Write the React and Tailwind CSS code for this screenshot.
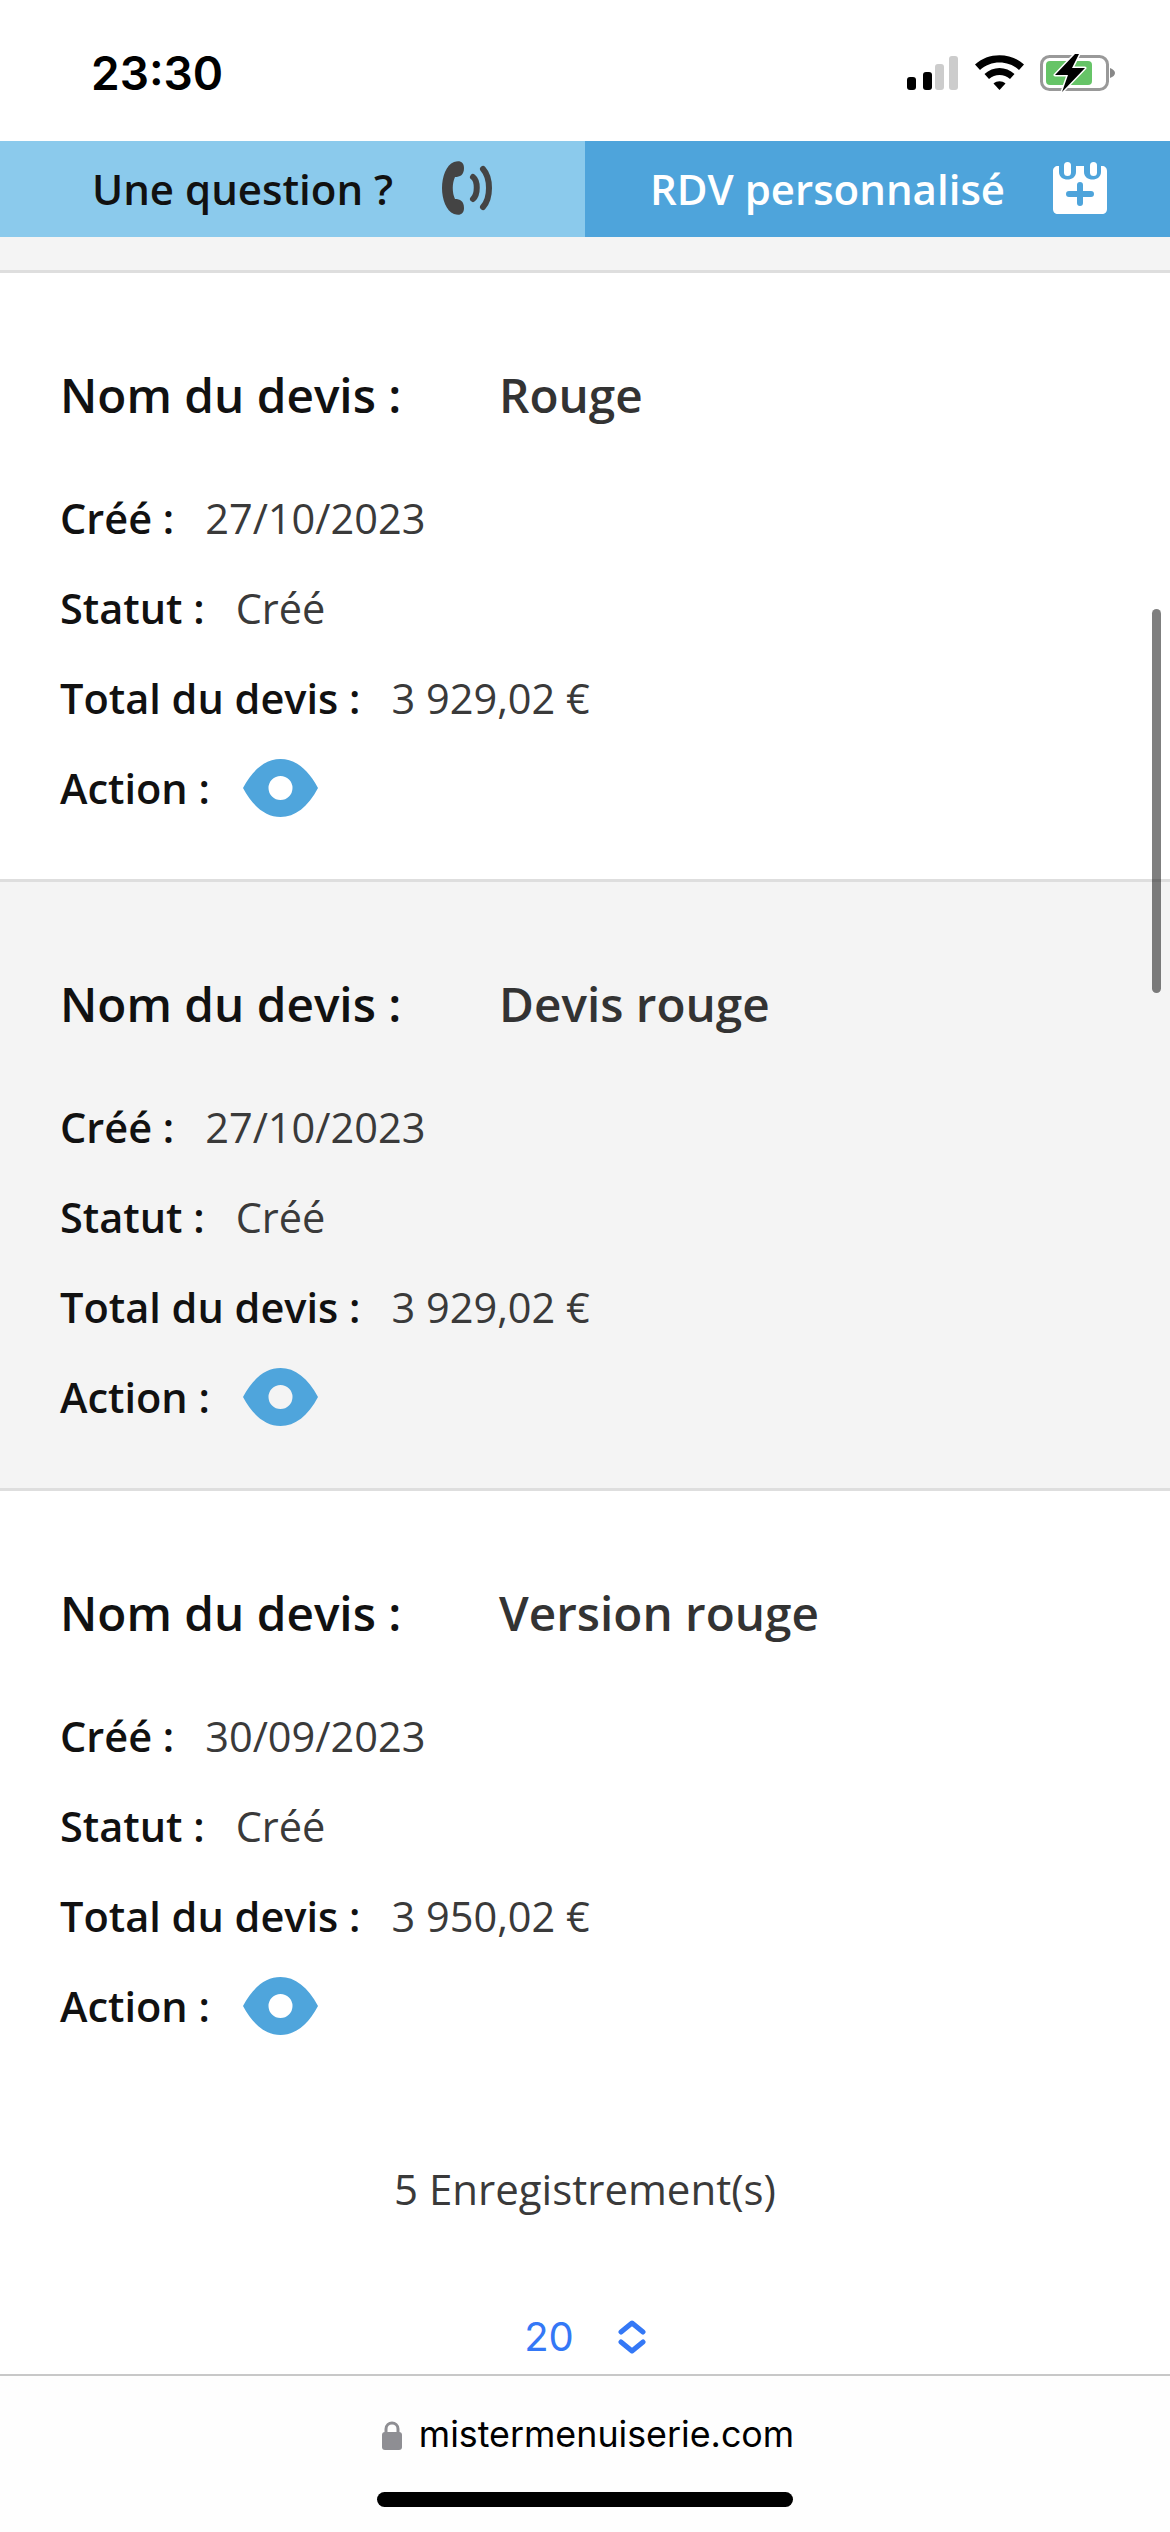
const devis = [
  { nom: 'Rouge', cree: '27/10/2023', total: '3 929,02 €', bg: 'bg-white border-[#dedede]' },
  { nom: 'Devis rouge', cree: '27/10/2023', total: '3 929,02 €', bg: 'bg-[#f4f4f4] border-[#dedede]' },
  { nom: 'Version rouge', cree: '30/09/2023', total: '3 950,02 €', bg: 'bg-white border-transparent' },
];

function StatusIcons() {
  return (
    <svg width="210" height="40" viewBox="0 0 210 40" className="block">
      <rect x="2" y="23" width="9" height="13" rx="3" fill="#000" />
      <rect x="18" y="18" width="9" height="18" rx="3" fill="#000" />
      <rect x="30" y="10" width="9" height="26" rx="3" fill="#ccc" />
      <rect x="44" y="2" width="9" height="34" rx="3" fill="#ccc" />
      <path d="M70 10.5C83 -2 106 -2 119 10.5L114 16C103.500 6 85.500 6 75 16Z" fill="#000" />
      <path d="M79.500 20C88 12 101 12 109.500 20L105 25C99 19.500 90 19.500 84 25Z" fill="#000" />
      <path d="M88.500 29.500C92 26.500 97 26.500 100.500 29.500L94.500 36Z" fill="#000" />
      <rect x="136.500" y="2.500" width="66" height="33" rx="8" fill="none" stroke="#999" strokeWidth="3" />
      <rect x="141" y="7" width="46" height="24" rx="4" fill="#66c467" />
      <path d="M205 14C208 15 210 17 210 19C210 21 208 23 205 24Z" fill="#888" />
      <path d="M170 0L150 21H163L157 38L180 14H167L174 0Z" fill="#000" stroke="#fff" strokeWidth="3" strokeLinejoin="round" paintOrder="stroke" />
    </svg>
  );
}

function PhoneIcon() {
  return (
    <svg width="51" height="54" viewBox="0 0 51 54" className="shrink-0">
      <path d="M12 1C18 -1 22 1 22 7C22 14 18 16 13 16C10 22 10 32 13 38C18 38 22 40 22 47C22 53 18 55 12 53C4 50 0 38 0 27C0 16 4 4 12 1Z" fill="#444" />
      <path d="M31 16C36 20 36 33 31 38" fill="none" stroke="#444" strokeWidth="6" strokeLinecap="round" />
      <path d="M41 8C49 17 49 37 41 46" fill="none" stroke="#444" strokeWidth="6" strokeLinecap="round" />
    </svg>
  );
}

function CalendarIcon() {
  return (
    <svg width="54" height="52" viewBox="0 0 54 52" className="shrink-0">
      <path d="M5 4H6V10C6 20 23 20 23 10V4H31V10C31 20 48 20 48 10V4H49C52 4 54 6 54 9V47C54 50 52 52 49 52H5C2 52 0 50 0 47V9C0 6 2 4 5 4Z" fill="#fff" />
      <rect x="11" y="0" width="7" height="14" rx="3.500" fill="#fff" />
      <rect x="37" y="0" width="7" height="14" rx="3.500" fill="#fff" />
      <path d="M27 23V41M16 32H38" stroke="#4ea4db" strokeWidth="6" strokeLinecap="round" />
    </svg>
  );
}

function EyeIcon() {
  return (
    <svg width="75" height="58" viewBox="0 0 75 58" className="ml-[2px] shrink-0">
      <path fillRule="evenodd" d="M0 29C10 10 23 0 37.500 0C52 0 65 10 75 29C65 48 52 58 37.500 58C23 58 10 48 0 29ZM37.500 17A12 12 0 1 0 37.500 41A12 12 0 1 0 37.500 17Z" fill="#4fa5dc" />
    </svg>
  );
}

function Row({ label, children }) {
  return (
    <div className="flex h-[90px] items-center gap-[31px] text-[41.500px]">
      <span className="font-semibold text-[#111]">{label}</span>
      {children}
    </div>
  );
}

function DevisCard({ item }) {
  return (
    <div className={`${item.bg} h-[609px] border-b-[3px] px-[60px] pt-[82px]`}>
      <div className="flex h-[80px] items-center text-[47.700px] font-semibold">
        <span className="w-[439px] text-[#111]">Nom du devis :</span>
        <span className="text-[#333]">{item.nom}</span>
      </div>
      <div className="mt-[38px] flex flex-col">
        <Row label="Créé :"><span className="font-normal text-[#3a3a3a]">{item.cree}</span></Row>
        <Row label="Statut :"><span className="font-normal text-[#3a3a3a]">Créé</span></Row>
        <Row label="Total du devis :"><span className="font-normal text-[#3a3a3a]">{item.total}</span></Row>
        <Row label="Action :"><EyeIcon /></Row>
      </div>
    </div>
  );
}

export default function App() {
  return (
    <div className="relative flex h-[2532px] w-[1170px] flex-col overflow-hidden bg-white font-['Open_Sans',sans-serif]">
      <div className="flex h-[141px] shrink-0 items-center justify-between pl-[91px] pr-[55px] pt-[6px]">
        <span className="font-['Inter',sans-serif] text-[46px] font-semibold text-black">23:30</span>
        <StatusIcons />
      </div>

      <div className="flex h-[96px] shrink-0 text-[42px] font-semibold">
        <div className="flex w-[585px] items-center bg-[#8bcaec] pb-[2px] pl-[92px] text-[#111]">
          <span className="w-[350px]">Une question ?</span>
          <PhoneIcon />
        </div>
        <div className="flex flex-1 items-center bg-[#4ea4db] pb-[2px] pl-[65px] text-white">
          <span className="w-[403px]">RDV personnalisé</span>
          <CalendarIcon />
        </div>
      </div>

      <div className="h-[36px] shrink-0 border-b-[3px] border-[#dedede] bg-[#f4f4f4]" />

      <div className="min-h-0 flex-1 overflow-hidden">
        {devis.map(item => <DevisCard key={item.nom} item={item} />)}
        <div className="mt-[57px] text-center text-[42px] text-[#3a3a3a]">5 Enregistrement(s)</div>
        <div className="mt-[87px] flex items-center justify-center gap-[44px] font-['Inter',sans-serif] text-[40px] text-[#3478f6]">
          <span>20</span>
          <svg width="28" height="34" viewBox="0 0 28 34" fill="none" stroke="#3478f6" strokeWidth="5" strokeLinecap="round" strokeLinejoin="round">
            <path d="M3 12L14 3L25 12M3 22L14 31L25 22" />
          </svg>
        </div>
      </div>

      <div className="flex h-[158px] shrink-0 flex-col items-center border-t-2 border-[#c8c8c8] bg-[#fefefe]">
        <div className="mt-[32px] flex items-center gap-[17px] pl-[6px]">
          <svg width="20" height="30" viewBox="0 0 20 30">
            <path d="M4 14V9C4 1 16 1 16 9V14" fill="none" stroke="#8e8e93" strokeWidth="3" />
            <rect x="0" y="12" width="20" height="18" rx="3" fill="#8e8e93" />
          </svg>
          <span className="font-['Inter',sans-serif] text-[35.800px] text-black">mistermenuiserie.com</span>
        </div>
        <div className="mt-[30px] h-[15px] w-[416px] rounded-full bg-black" />
      </div>

      <div className="absolute left-[1152px] top-[609px] h-[384px] w-[9px] rounded-full bg-black/50" />
    </div>
  );
}
